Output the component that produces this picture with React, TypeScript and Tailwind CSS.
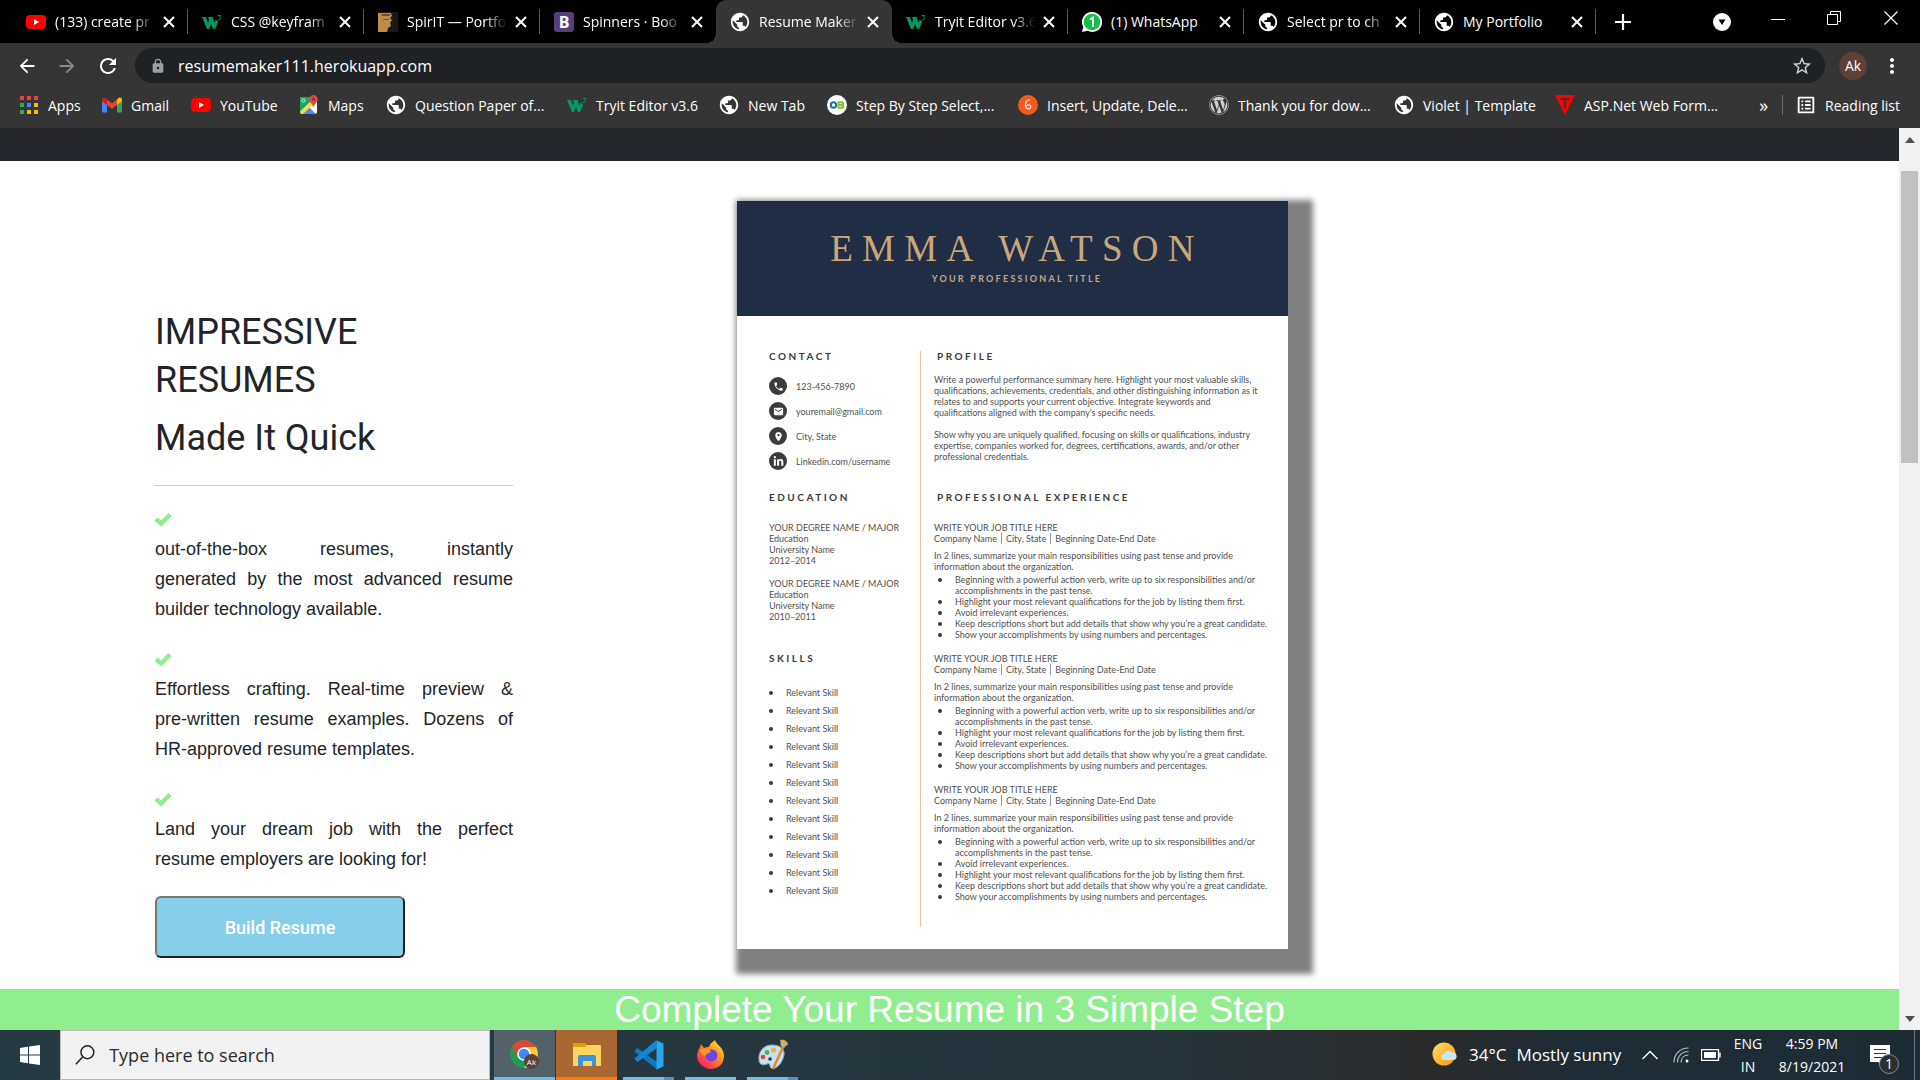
import React from "react";
import {
  MdPublic,
  MdLock,
  MdStarBorder,
  MdArrowBack,
  MdArrowForward,
  MdRefresh,
  MdMoreVert,
  MdListAlt,
  MdPhone,
  MdEmail,
  MdPlace,
} from "react-icons/md";
import { FaWordpress, FaLinkedinIn } from "react-icons/fa";

const Globe = () => <MdPublic className="size-[22px] shrink-0 text-white" />;

const YouTube = () => (
  <svg viewBox="0 0 20 20" className="size-5 shrink-0">
    <rect x="0" y="3" width="20" height="14" rx="4" fill="#f00" />
    <path d="M8 7l5 3-5 3z" fill="#fff" />
  </svg>
);

const W3 = () => (
  <svg viewBox="0 0 20 20" className="size-5 shrink-0">
    <path d="M0 5h4l2 5.500L7 8 6 5h4.500l2 5.500L14 7.500l2 2.500-3 7h-2L9 12l-2 5H5z" fill="#059862" />
    <path d="M16 3.500h2.800L17.500 5.300c2 .2 1.500 3-1.500 2.200" fill="none" stroke="#059862" strokeWidth="1" />
  </svg>
);

const Portrait = () => (
  <svg viewBox="0 0 20 20" className="size-5 shrink-0">
    <rect width="20" height="20" fill="#191919" />
    <path d="M0 1h13l1 3-2 2 2 2-2 3 1 3-3 2-1 4H0z" fill="#c08a4a" />
    <path d="M3 2h9v2H4zM5 7h6v1H5z" fill="#76502a" />
  </svg>
);

const Bootstrap = () => (
  <span className="flex size-5 shrink-0 items-center justify-center rounded-[3px] bg-[#563d7c] text-[16px] leading-5 font-bold text-white">
    B
  </span>
);

const WhatsApp = () => (
  <svg viewBox="0 0 20 20" className="size-5 shrink-0">
    <path d="M10 0a10 10 0 1 1-4.500 18.800L0 20l1.300-5A10 10 0 0 1 10 0z" fill="#fff" />
    <circle cx="10" cy="10" r="8.300" fill="#12c245" />
    <path d="M8 7.500l3-2V15" fill="none" stroke="#fff" strokeWidth="2" />
  </svg>
);

const AppsGrid = () => (
  <svg viewBox="0 0 18 18" className="size-[18px] shrink-0">
    {["#ea4335", "#ea4335", "#ea4335", "#34a853", "#4285f4", "#fbbc04", "#34a853", "#fbbc04", "#fbbc04"].map((c, i) => (
      <rect key={i} x={(i % 3) * 7} y={Math.floor(i / 3) * 7} width="4" height="4" fill={c} />
    ))}
  </svg>
);

const Gmail = () => (
  <svg viewBox="0 0 20 20" className="size-5 shrink-0">
    <path d="M0 5v11a1.500 1.500 0 0 0 1.500 1.500H5V9z" fill="#4285f4" />
    <path d="M20 5v11a1.500 1.500 0 0 1-1.500 1.500H15V9z" fill="#34a853" />
    <path d="M15 4.500V10l5-3.800V5c0-2.200-2-3-3.300-2z" fill="#fbbc04" />
    <path d="M0 6.200L5 10V4.500L3.300 3C1.800 2 0 3 0 5z" fill="#c5221f" />
    <path d="M5 4.500V10l5 3.800L15 10V4.500l-5 3.800z" fill="#ea4335" />
  </svg>
);

const Maps = () => (
  <svg viewBox="0 0 20 20" className="size-5 shrink-0">
    <rect x="1" y="2" width="17" height="17" rx="2" fill="#fff" />
    <path d="M1 4a2 2 0 0 1 2-2h9l1 6L1 19z" fill="#1ea362" />
    <path d="M2 19l7.500-7.500L17 19z" fill="#4a89f3" />
    <path d="M1 16.500L13.500 4.500l3 3L4 19H2z" fill="#fdd74a" />
    <path d="M14.500 0a4.200 4.200 0 0 1 4.200 4.200c0 3-3 4-4.200 8-1.200-4-4.200-5-4.200-8A4.200 4.200 0 0 1 14.500 0z" fill="#dd4b3e" />
    <circle cx="14.500" cy="4.200" r="1.500" fill="#822f2b" />
    <circle cx="4.500" cy="5.500" r="1.600" fill="none" stroke="#fff" strokeWidth="0.800" />
  </svg>
);

const DotCircle = () => (
  <svg viewBox="0 0 20 20" className="size-5 shrink-0">
    <circle cx="10" cy="10" r="10" fill="#fff" />
    <circle cx="6.500" cy="10" r="2.700" fill="none" stroke="#1570b8" strokeWidth="2" />
    <path d="M10.500 6.200h4a2.600 2.600 0 0 1 2.500 3.800 2.600 2.600 0 0 1-2.500 3.800h-4z" fill="#8cc11f" />
    <path d="M12.500 8.600h2M12.500 11.400h2" stroke="#fff" strokeWidth="1" />
  </svg>
);

const OrangeCircle = () => (
  <svg viewBox="0 0 20 20" className="size-5 shrink-0">
    <circle cx="10" cy="10" r="10" fill="#f45a1e" />
    <path d="M12 5c-3-1-4.500 2-4.500 5.500 0 4 5 4.500 5.200 1.500.2-2.800-3.500-2.800-4.700-.5" fill="none" stroke="#ffe3d6" strokeWidth="1.300" />
  </svg>
);

const RedTriangle = () => (
  <svg viewBox="0 0 20 20" className="size-5 shrink-0">
    <path d="M0 0h20L10 20z" fill="#f00" />
    <path d="M5.500 4h9M10 4v9" stroke="#353535" strokeWidth="2" />
  </svg>
);

const tabs = [
  { title: "(133) create pr", icon: <YouTube /> },
  { title: "CSS @keyfram", icon: <W3 /> },
  { title: "SpirIT — Portfo", icon: <Portrait /> },
  { title: "Spinners · Boo", icon: <Bootstrap /> },
  { title: "Resume Maker", icon: <Globe />, active: true },
  { title: "Tryit Editor v3.6", icon: <W3 /> },
  { title: "(1) WhatsApp", icon: <WhatsApp />, whole: true },
  { title: "Select pr to ch", icon: <Globe /> },
  { title: "My Portfolio", icon: <Globe />, whole: true },
];

const bookmarks = [
  { label: "Apps", icon: <AppsGrid />, width: "w-[83px]" },
  { label: "Gmail", icon: <Gmail />, width: "w-[89px]" },
  { label: "YouTube", icon: <YouTube />, width: "w-[108px]" },
  { label: "Maps", icon: <Maps />, width: "w-[87px]" },
  { label: "Question Paper of...", icon: <Globe />, width: "w-[181px]" },
  { label: "Tryit Editor v3.6", icon: <W3 />, width: "w-[152px]" },
  { label: "New Tab", icon: <Globe />, width: "w-[108px]" },
  { label: "Step By Step Select,...", icon: <DotCircle />, width: "w-[191px]" },
  { label: "Insert, Update, Dele...", icon: <OrangeCircle />, width: "w-[191px]" },
  { label: "Thank you for dow...", icon: <FaWordpress className="size-5 shrink-0 text-[#d0d0d0]" />, width: "w-[185px]" },
  { label: "Violet | Template", icon: <Globe />, width: "w-[161px]" },
  { label: "ASP.Net Web Form...", icon: <RedTriangle />, width: "w-[172px]" },
];

function TabStrip() {
  return (
    <div className="flex h-[43px] bg-black pl-3">
      {tabs.map((t, i) => (
        <div
          key={t.title}
          className={
            t.active
              ? "relative flex w-44 items-center rounded-t-[10px] bg-[#353535] pr-[9px] pl-[13px]"
              : "relative flex w-44 items-center pr-[9px] pl-[13px]"
          }
        >
          {t.active && (
            <>
              <span className="absolute bottom-0 -left-[10px] size-[10px] bg-[radial-gradient(circle_at_0_0,transparent_10px,#353535_10px)]" />
              <span className="absolute -right-[10px] bottom-0 size-[10px] bg-[radial-gradient(circle_at_100%_0,transparent_10px,#353535_10px)]" />
            </>
          )}
          <span className="flex w-[22px] justify-center">{t.icon}</span>
          <button
            className={
              t.whole
                ? "ml-2 flex-1 text-left text-[14px] whitespace-nowrap text-white"
                : "ml-2 w-0 flex-1 text-left text-[14px] whitespace-nowrap text-white [mask-image:linear-gradient(to_right,#000_78%,transparent)]"
            }
          >
            {t.title}
          </button>
          <button aria-label={"Close " + t.title} className="ml-1 flex size-5 items-center justify-center">
            <svg viewBox="0 0 12 12" className="size-3">
              <path d="M1 1l10 10M11 1L1 11" stroke="#fff" strokeWidth="2" />
            </svg>
          </button>
          {!t.active && i !== 3 && <span className="absolute right-0 h-[25px] w-px bg-[#5c5c5c]" />}
        </div>
      ))}
      <button aria-label="New tab" className="ml-[18px] flex w-[18px] items-center justify-center">
        <svg viewBox="0 0 16 16" className="size-4">
          <path d="M8 0v16M0 8h16" stroke="#fff" strokeWidth="2.200" />
        </svg>
      </button>
      <div className="ml-auto flex items-center">
        <button aria-label="Search tabs" className="flex w-14 justify-center">
          <svg viewBox="0 0 18 18" className="size-[18px]">
            <circle cx="9" cy="9" r="9" fill="#fff" />
            <path d="M5.500 6.500h7L9 12z" fill="#000" />
          </svg>
        </button>
        <button aria-label="Minimize" className="flex w-14 justify-center pb-2">
          <svg viewBox="0 0 14 14" className="size-[14px]">
            <path d="M0 8.500h14" stroke="#fff" />
          </svg>
        </button>
        <button aria-label="Restore" className="flex w-14 justify-center pb-2">
          <svg viewBox="0 0 14 14" className="size-[14px]" fill="none" stroke="#fff">
            <path d="M.5 3.500h10v10H.5zM3.500 3V.5h10v10H11" />
          </svg>
        </button>
        <button aria-label="Close window" className="flex w-[58px] justify-center pb-2">
          <svg viewBox="0 0 14 14" className="size-[14px]">
            <path d="M.5.5l13 13M13.500.5l-13 13" stroke="#fff" strokeWidth="1.200" />
          </svg>
        </button>
      </div>
    </div>
  );
}

function Toolbar() {
  return (
    <div className="flex h-[45px] items-center bg-[#353535] pr-4 pl-4 text-white">
      <button aria-label="Back" className="mr-[18px]">
        <MdArrowBack className="size-[22px]" />
      </button>
      <button aria-label="Forward" className="mr-[18px] text-[#8a8a8a]">
        <MdArrowForward className="size-[22px]" />
      </button>
      <button aria-label="Reload" className="mr-[15px]">
        <MdRefresh className="size-6" />
      </button>
      <div className="flex h-[35px] flex-1 items-center rounded-full bg-[#202124] pr-3 pl-[15px]">
        <MdLock className="size-4 text-[#9aa0a6]" />
        <input
          aria-label="Address"
          defaultValue="resumemaker111.herokuapp.com"
          className="ml-3 flex-1 bg-transparent text-[16px] text-white outline-none"
        />
        <button aria-label="Bookmark this page">
          <MdStarBorder className="size-[22px] text-[#cfcfcf]" />
        </button>
      </div>
      <button className="ml-[14px] size-7 rounded-full bg-[#5d4037] text-[14px]">Ak</button>
      <button aria-label="Menu" className="ml-[13px]">
        <MdMoreVert className="size-6" />
      </button>
    </div>
  );
}

function Bookmarks() {
  return (
    <div className="flex h-10 items-center bg-[#353535] pb-[6px] pl-[18px] text-[14px] whitespace-nowrap text-white">
      {bookmarks.map((b) => (
        <a key={b.label} href="#" className={"flex items-center gap-2 " + b.width}>
          <span className="flex w-[22px] shrink-0 justify-center">{b.icon}</span>
          {b.label}
        </a>
      ))}
      <button aria-label="More bookmarks" className="ml-auto text-[18px]">
        »
      </button>
      <span className="ml-[14px] h-5 w-px bg-[#6a6a6a]" />
      <button className="mr-5 ml-3 flex items-center gap-2">
        <MdListAlt className="size-[22px]" />
        Reading list
      </button>
    </div>
  );
}

const points = [
  ["out-of-the-box resumes, instantly", "generated by the most advanced resume", "builder technology available."],
  ["Effortless crafting. Real-time preview &", "pre-written resume examples. Dozens of", "HR-approved resume templates."],
  ["Land your dream job with the perfect", "resume employers are looking for!"],
];

function Pitch() {
  return (
    <div className="w-[358px] pt-[147px] text-[#212529]">
      <h1 className="font-[Roboto,sans-serif] text-[36px] leading-[48px]">
        IMPRESSIVE
        <br />
        RESUMES
      </h1>
      <h2 className="mt-[10px] font-[Roboto,sans-serif] text-[36px] leading-[48px]">Made It Quick</h2>
      <hr className="mt-[23px] border-[#c8c9ca]" />
      <ul className="mt-[18px] flex flex-col gap-5 font-['Liberation_Sans',sans-serif]">
        {points.map((lines) => (
          <li key={lines[0]}>
            <span className="flex h-[30px] items-center">
              <svg viewBox="0 0 18 14" className="-ml-px h-[14px] w-[18px]">
                <path d="M2 7l5 4.500L16 2.500" fill="none" stroke="#90ee90" strokeWidth="4.500" />
              </svg>
            </span>
            <p className="text-[18px] leading-[30px]">
              {lines.map((line, i) => (
                <span
                  key={line}
                  className={i < lines.length - 1 ? "block [text-align-last:justify]" : "block"}
                >
                  {line}
                </span>
              ))}
            </p>
          </li>
        ))}
      </ul>
      <button className="mt-[22px] h-[62px] w-[250px] rounded-md border-2 border-t-[#767676] border-r-[#212121] border-b-[#212121] border-l-[#767676] bg-[#87ceeb] font-[Roboto,sans-serif] text-[18px] font-medium text-white">
        Build Resume
      </button>
    </div>
  );
}

const contacts = [
  { icon: <MdPhone />, text: "123-456-7890" },
  { icon: <MdEmail />, text: "youremail@gmail.com" },
  { icon: <MdPlace />, text: "City, State" },
  { icon: <FaLinkedinIn />, text: "Linkedin.com/username" },
];

const begin = "Beginning with a powerful action verb, write up to six responsibilities and/or\naccomplishments in the past tense.";
const highlight = "Highlight your most relevant qualifications for the job by listing them first.";
const avoid = "Avoid irrelevant experiences.";
const keep = "Keep descriptions short but add details that show why you’re a great candidate.";
const show = "Show your accomplishments by using numbers and percentages.";

const jobs = [
  [begin, highlight, avoid, keep, show],
  [begin, highlight, avoid, keep, show],
  [begin, avoid, highlight, keep, show],
];

const Title = ({ children }: { children: React.ReactNode }) => (
  <h3 className="text-[10px] leading-[11px] font-bold tracking-[0.25em] text-[#3a3a3a]">{children}</h3>
);

function Resume() {
  return (
    <article className="mt-10 h-[748px] w-[551px] bg-white font-[Lato,sans-serif] text-[9px] leading-[11px] whitespace-nowrap text-[#505050] shadow-[12px_12px_6px_13px_#808080]">
      <header className="flex h-[115px] flex-col items-center bg-[#212d45] pt-7 text-[#c9a77c]">
        <h2 className="pl-[9px] font-['Liberation_Serif',serif] text-[37px] leading-10 tracking-[0.25em]">EMMA WATSON</h2>
        <p className="mt-1 pl-[9px] text-[9px] leading-[11px] font-bold tracking-[0.25em]">YOUR PROFESSIONAL TITLE</p>
      </header>
      <div className="flex pt-[35px]">
        <div className="w-[183px] pl-8">
          <Title>CONTACT</Title>
          <ul className="mt-[15px] flex flex-col gap-[7px]">
            {contacts.map((c) => (
              <li key={c.text} className="flex items-center gap-[9px]">
                <span className="flex size-[18px] items-center justify-center rounded-full bg-[#3b3b3b] text-[11px] text-white">
                  {c.icon}
                </span>
                {c.text}
              </li>
            ))}
          </ul>
          <div className="mt-[22px]">
            <Title>EDUCATION</Title>
          </div>
          {["2012–2014", "2010–2011"].map((y, i) => (
            <p key={y} className={i === 0 ? "mt-[19px]" : "mt-3"}>
              YOUR DEGREE NAME / MAJOR
              <br />
              Education
              <br />
              University Name
              <br />
              {y}
            </p>
          ))}
          <div className="mt-[31px]">
            <Title>SKILLS</Title>
          </div>
          <ul className="mt-5 leading-[18px]">
            {Array.from({ length: 12 }, (_, i) => (
              <li key={i} className="flex items-center gap-[13px]">
                <span className="size-1 rounded-full bg-[#3a3a3a]" />
                Relevant Skill
              </li>
            ))}
          </ul>
        </div>
        <div className="h-[576px] w-px bg-[#ecc9a0]" />
        <div className="w-[340px] pl-[13px]">
          <div className="pl-[3px]">
            <Title>PROFILE</Title>
          </div>
          <p className="mt-3">
            Write a powerful performance summary here. Highlight your most valuable skills,
            <br />
            qualifications, achievements, credentials, and other distinguishing information as it
            <br />
            relates to and supports your current objective. Integrate keywords and
            <br />
            qualifications aligned with the company’s specific needs.
          </p>
          <p className="mt-[11px]">
            Show why you are uniquely qualified, focusing on skills or qualifications, industry
            <br />
            expertise, companies worked for, degrees, certifications, awards, and/or other
            <br />
            professional credentials.
          </p>
          <div className="mt-[30px] pl-[3px]">
            <Title>PROFESSIONAL EXPERIENCE</Title>
          </div>
          <div className="mt-[19px] flex flex-col gap-[13px]">
            {jobs.map((items, i) => (
              <section key={i}>
                <h4>WRITE YOUR JOB TITLE HERE</h4>
                <p className="flex gap-1">
                  <span className="border-r border-[#999] pr-1">Company Name</span>
                  <span className="border-r border-[#999] pr-1">City, State</span>
                  <span>Beginning Date-End Date</span>
                </p>
                <p className="mt-[6px]">
                  In 2 lines, summarize your main responsibilities using past tense and provide
                  <br />
                  information about the organization.
                </p>
                <ul className="mt-[2px]">
                  {items.map((t) => (
                    <li key={t} className="flex gap-[13px] pl-1 whitespace-pre">
                      <span className="mt-1 size-1 shrink-0 rounded-full bg-[#3a3a3a]" />
                      {t}
                    </li>
                  ))}
                </ul>
              </section>
            ))}
          </div>
        </div>
      </div>
    </article>
  );
}

function Scrollbar() {
  return (
    <div className="flex w-[21px] flex-col items-center bg-[#f1f1f1]">
      <span className="mt-[9px] border-x-[5px] border-b-[6px] border-x-transparent border-b-[#505050]" />
      <span className="mt-[28px] h-[292px] w-[17px] bg-[#c1c1c1]" />
      <span className="mt-auto mb-2 border-x-[5px] border-t-[6px] border-x-transparent border-t-[#505050]" />
    </div>
  );
}

const ChromeIcon = () => (
  <svg viewBox="0 0 32 32" className="size-8">
    <circle cx="15" cy="16" r="14" fill="#1e9e54" />
    <path d="M2.900 9A14 14 0 0 1 27.100 9H15L9 19.500z" fill="#d9483b" />
    <path d="M27.100 9A14 14 0 0 1 15 30l6-10.500L15 9z" fill="#fcc934" />
    <circle cx="15" cy="16" r="6.800" fill="#fff" />
    <circle cx="15" cy="16" r="5.200" fill="#4285f4" />
    <circle cx="22.500" cy="23.500" r="7.500" fill="#5d4037" />
    <text x="22.500" y="26.500" fontSize="8" textAnchor="middle" fill="#fff">
      Ak
    </text>
  </svg>
);

const FolderIcon = () => (
  <svg viewBox="0 0 30 26" className="h-[26px] w-[30px]">
    <path d="M1 3a1 1 0 0 1 1-1h11l2 2v4H1z" fill="#dda00d" />
    <path d="M1 6h12l2-2h13a1 1 0 0 1 1 1v20H1z" fill="#fbd462" />
    <path d="M6 25V16a2 2 0 0 1 2-2h14a2 2 0 0 1 2 2v9h-4v-5h-9v5z" fill="#3a93dc" />
  </svg>
);

const CodeIcon = () => (
  <svg viewBox="0 0 30 30" className="size-[30px]">
    <path d="M1.500 9.500L3.500 8 23 22v7.500L0.500 11.500z" fill="#0b78c0" />
    <path d="M0.500 18.500L22 0.500 23 8 3.500 22z" fill="#1287d4" />
    <path d="M21.500 0L29.500 3.500v23L21.500 30c1-.5 1-1 1-2V2c0-1 0-1.500-1-2z" fill="#2aa5f0" />
  </svg>
);

const FirefoxIcon = () => (
  <svg viewBox="0 0 30 30" className="size-[30px]">
    <defs>
      <linearGradient id="fox" x1="1" y1="0" x2="0.200" y2="1">
        <stop offset="0" stopColor="#fff14a" />
        <stop offset="0.450" stopColor="#ff9020" />
        <stop offset="1" stopColor="#f5156c" />
      </linearGradient>
    </defs>
    <path d="M5 4l3 4c2-1 4-1 5-1 1-4 4-5 6-7 1 5 9 7 9 16 0 8-6 13-13 13S1 23 1 16C1 11 4 9 5 4z" fill="url(#fox)" />
    <circle cx="15.500" cy="15.500" r="6" fill="#7542e5" />
    <path d="M4 10c4-3 8-1 11 1-1 3-5 2-6 5-2 0-4-2-5-6z" fill="#ff9a1f" />
  </svg>
);

const PaintIcon = () => (
  <svg viewBox="0 0 32 32" className="size-8">
    <path d="M15 6c8 0 13 4 12 10-1 5-4 11-9 13-3 1-5 0-5-2s-1-3-3-2c-5 2-8 0-8-4C1 12 7 6 15 6z" fill="#c7dfee" stroke="#88a9bf" />
    <circle cx="6" cy="18" r="2.300" fill="#e2452b" />
    <circle cx="10" cy="13.500" r="2.400" fill="#4eb04e" />
    <circle cx="16.500" cy="11" r="2.500" fill="#f1b521" />
    <circle cx="13" cy="20" r="1.800" fill="#2a373e" />
    <path d="M27 6L16 30" stroke="#d98a35" strokeWidth="2.500" />
    <path d="M24 7c-1-3 0-4-1-6 5-1 8 2 8 5-2 0-3 2-4 3z" fill="#d4aa76" />
  </svg>
);

function Taskbar() {
  return (
    <footer className="flex h-[50px] items-stretch bg-[linear-gradient(to_right,#263a43,#27353c_60%,#2a2a2a_74%,#1e2c35_82%,#1d2b34)] text-white">
      <button aria-label="Start" className="flex w-[60px] items-center justify-center">
        <svg viewBox="0 0 20 20" className="size-5" fill="#fff">
          <path d="M0 3l8-1.200v7.700H0zM9 1.600L20 0v9.500H9zM0 10.500h8v7.700L0 17zM9 10.500h11V20L9 18.400z" />
        </svg>
      </button>
      <label className="flex w-[430px] items-center border border-[#b9b9b9] bg-[#f2f2f2] pl-[14px] text-[#222]">
        <svg viewBox="0 0 22 22" className="size-[22px]" fill="none" stroke="#222" strokeWidth="1.600">
          <circle cx="13.500" cy="8" r="7" />
          <path d="M8.500 13L1 21" />
        </svg>
        <input
          aria-label="Search"
          placeholder="Type here to search"
          className="ml-[14px] w-full bg-transparent text-[18px] outline-none placeholder:text-[#2b2b2b]"
        />
      </label>
      <button aria-label="Chrome" className="ml-1 flex w-[61px] items-center justify-center border-b-[3px] border-[#76b9ed] bg-[#53616a]">
        <ChromeIcon />
      </button>
      <button aria-label="File Explorer" className="ml-px flex w-[61px] items-center justify-center border-b-[3px] border-[#ff7b00] bg-[#ab6732]">
        <FolderIcon />
      </button>
      <button
        aria-label="Visual Studio Code"
        className="ml-[6px] flex w-[51px] items-center justify-center bg-[linear-gradient(to_right,#76b9ed_80%,#5f8fb8_80%)] bg-[length:100%_3px] bg-bottom bg-no-repeat"
      >
        <CodeIcon />
      </button>
      <button
        aria-label="Firefox"
        className="ml-[11px] flex w-[51px] items-center justify-center bg-[linear-gradient(#76b9ed,#76b9ed)] bg-[length:100%_3px] bg-bottom bg-no-repeat"
      >
        <FirefoxIcon />
      </button>
      <button
        aria-label="Paint"
        className="ml-[11px] flex w-[51px] items-center justify-center bg-[linear-gradient(to_right,#76b9ed_80%,#5f8fb8_80%)] bg-[length:100%_3px] bg-bottom bg-no-repeat"
      >
        <PaintIcon />
      </button>
      <div className="ml-auto flex items-center">
        <svg viewBox="0 0 26 26" className="size-[26px]">
          <defs>
            <linearGradient id="sun" x1="0" y1="0" x2="1" y2="1">
              <stop offset="0" stopColor="#ffe070" />
              <stop offset="1" stopColor="#ff9500" />
            </linearGradient>
          </defs>
          <circle cx="12" cy="12" r="11.500" fill="url(#sun)" />
          <path d="M12 18a3 3 0 0 1 0-6 4.500 4.500 0 0 1 8-1.500 3.800 3.800 0 0 1 1.500 7.500z" fill="#c8e5fb" />
        </svg>
        <span className="ml-[11px] flex w-[153px] gap-[10px] text-[17px] whitespace-nowrap">
          <span>34°C</span>
          <span>Mostly sunny</span>
        </span>
        <svg viewBox="0 0 16 10" className="ml-5 h-[10px] w-4" fill="none" stroke="#fff" strokeWidth="1.300">
          <path d="M.5 9L8 1.500 15.500 9" />
        </svg>
        <svg viewBox="0 0 16 16" className="ml-[15px] size-4" fill="none" stroke="#bbb" strokeWidth="1.200">
          <path d="M1 15.500C1 7 7 1 15.500 1M4.500 15.500C4.500 9 9 4.500 15.500 4.500M8 15.500C8 11 11 8 15.500 8" />
          <circle cx="14" cy="14" r="1.500" fill="#fff" stroke="none" />
        </svg>
        <svg viewBox="0 0 20 12" className="ml-3 h-3 w-5" fill="none" stroke="#fff">
          <path d="M.5.5h17v11H.5zM19 3.500v5" strokeWidth="1.300" />
          <path d="M3 3h12v6H3z" fill="#fff" stroke="none" />
        </svg>
        <span className="ml-[11px] w-8 text-center text-[14px] leading-[23px]">
          ENG
          <br />
          IN
        </span>
        <span className="ml-[10px] w-[76px] text-center text-[14px] leading-[23px] whitespace-nowrap">
          4:59 PM
          <br />
          8/19/2021
        </span>
        <button aria-label="Notifications" className="relative mr-6 ml-5">
          <svg viewBox="0 0 20 20" className="size-5">
            <path d="M0 0h20v17h-8v3l-4-3H0z" fill="#fff" />
            <path d="M4 4.500h12M4 8.500h12M4 12.500h8" stroke="#26343c" strokeWidth="1.200" />
          </svg>
          <span className="absolute top-[9px] left-[9px] size-5 rounded-full border border-[#8a8a8a] bg-[#2b2f32] text-[14px] leading-[18px]">
            1
          </span>
        </button>
        <span className="mr-[5px] h-[50px] w-px bg-[#6c757a]" />
      </div>
    </footer>
  );
}

export default function App() {
  return (
    <div className="flex h-screen flex-col overflow-hidden bg-white font-['Open_Sans','Noto_Sans',sans-serif]">
      <TabStrip />
      <Toolbar />
      <Bookmarks />
      <div className="flex min-h-0 flex-1">
        <main className="min-w-0 flex-1 overflow-hidden">
          <nav className="h-[33px] bg-[#24262b]" />
          <section className="flex h-[828px] gap-56 pl-[155px]">
            <Pitch />
            <Resume />
          </section>
          <h2 className="h-[60px] bg-[#90ee90] text-center font-['Liberation_Sans',sans-serif] text-[37px] leading-[42px] text-white">
            Complete Your Resume in 3 Simple Step
          </h2>
        </main>
        <Scrollbar />
      </div>
      <Taskbar />
    </div>
  );
}
